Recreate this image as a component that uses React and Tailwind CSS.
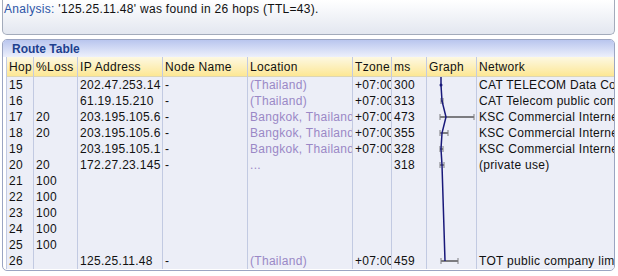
import React from "react";

const cols = [
  { key: "hop", title: "Hop", w: 27 },
  { key: "loss", title: "%Loss", w: 44 },
  { key: "ip", title: "IP Address", w: 85 },
  { key: "node", title: "Node Name", w: 85 },
  { key: "loc", title: "Location", w: 105 },
  { key: "tz", title: "Tzone", w: 39 },
  { key: "ms", title: "ms", w: 35 },
  { key: "graph", title: "Graph", w: 50 },
  { key: "net", title: "Network", w: 137 },
];

const rows = [
  { hop: "15", loss: "", ip: "202.47.253.14", node: "-", loc: "(Thailand)", tz: "+07:00", ms: "300", net: "CAT TELECOM Data Communication" },
  { hop: "16", loss: "", ip: "61.19.15.210", node: "-", loc: "(Thailand)", tz: "+07:00", ms: "313", net: "CAT Telecom public company" },
  { hop: "17", loss: "20", ip: "203.195.105.6", node: "-", loc: "Bangkok, Thailand", tz: "+07:00", ms: "473", net: "KSC Commercial Internet" },
  { hop: "18", loss: "20", ip: "203.195.105.6", node: "-", loc: "Bangkok, Thailand", tz: "+07:00", ms: "355", net: "KSC Commercial Internet" },
  { hop: "19", loss: "", ip: "203.195.105.1", node: "-", loc: "Bangkok, Thailand", tz: "+07:00", ms: "328", net: "KSC Commercial Internet" },
  { hop: "20", loss: "20", ip: "172.27.23.145", node: "-", loc: "...", tz: "", ms: "318", net: "(private use)" },
  { hop: "21", loss: "100", ip: "", node: "", loc: "", tz: "", ms: "", net: "" },
  { hop: "22", loss: "100", ip: "", node: "", loc: "", tz: "", ms: "", net: "" },
  { hop: "23", loss: "100", ip: "", node: "", loc: "", tz: "", ms: "", net: "" },
  { hop: "24", loss: "100", ip: "", node: "", loc: "", tz: "", ms: "", net: "" },
  { hop: "25", loss: "100", ip: "", node: "", loc: "", tz: "", ms: "", net: "" },
  { hop: "26", loss: "", ip: "125.25.11.48", node: "-", loc: "(Thailand)", tz: "+07:00", ms: "459", net: "TOT public company limited" },
];

function Graph() {
  const pts = [
    [14, 0], [14, 8], [15, 24], [19, 40], [15, 56], [14, 72], [15, 88],
    [16, 120], [17, 152], [18, 184],
  ];
  const d = pts.map((p, i) => (i ? "L" : "M") + p[0] + " " + p[1]).join(" ");
  const bars = [
    [14, 16, 24],
    [13, 47, 40],
    [13, 21, 56],
    [13, 16, 72],
    [13, 17, 88],
    [14, 31, 184],
  ];
  return (
    <svg width="49" height="192" viewBox="0 0 49 192" className="block">
      {bars.map(([a, b, y], i) => (
        <g key={i} stroke="#7c7c80" strokeWidth="2">
          <line x1={a} y1={y} x2={b} y2={y} />
          <line x1={a} y1={y - 3} x2={a} y2={y + 3} strokeWidth="1" />
          <line x1={b} y1={y - 3} x2={b} y2={y + 3} strokeWidth="1" />
        </g>
      ))}
      <path d={d} fill="none" stroke="#18187a" strokeWidth="1.5" />
      <circle cx="14" cy="8" r="1.5" fill="#18187a" />
    </svg>
  );
}

export default function App() {
  return (
    <div className="w-[618px] h-[276px] bg-white overflow-hidden font-['Liberation_Sans',Arial,sans-serif] text-[12px] tracking-[0.3px] text-[#111]">
      <div className="ml-[2px] w-[613px] h-[35px] border border-t-0 border-[#a3abbb] rounded-b-[5px] bg-gradient-to-b from-white to-[#e3e7f0] pl-[1px] leading-[19px]">
        <span className="text-[#2d55a6]">Analysis:</span>{" "}
        <span>'125.25.11.48' was found in 26 hops (TTL=43).</span>
      </div>
      <div className="mt-[4px] ml-[2px] w-[613px] h-[232px] border border-[#9ba5c2] rounded-[5px] overflow-hidden bg-white">
        <div className="h-[17px] bg-gradient-to-b from-[#b9c5ee] to-[#edf0fb] pl-[9px] font-bold text-[#20408e] leading-[18px] tracking-normal">
          Route Table
        </div>
        <div className="ml-[3px] flex border-l border-[#c2cae2]">
          {cols.map((c) => (
            <div
              key={c.key}
              style={{ width: c.w }}
              className="shrink-0 border-r border-[#c2cae2] last:border-r-0 flex flex-col"
            >
              <div className="h-[20px] bg-gradient-to-b from-[#fdf8e2] to-[#fde793] border-b border-[#ddd6b4] pl-[2px] leading-[20px] whitespace-nowrap overflow-hidden">
                {c.title}
              </div>
              <div className="bg-[#eceef7] h-[192px]">
                {c.key === "graph" ? (
                  <Graph />
                ) : (
                  rows.map((r, ri) => (
                    <div
                      key={ri}
                      className={
                        "h-[16px] leading-[17px] pl-[2px] whitespace-nowrap overflow-hidden " +
                        (c.key === "loc" ? "text-[#9a88c6]" : "")
                      }
                    >
                      {r[c.key]}
                    </div>
                  ))
                )}
              </div>
            </div>
          ))}
        </div>
      </div>
    </div>
  );
}
